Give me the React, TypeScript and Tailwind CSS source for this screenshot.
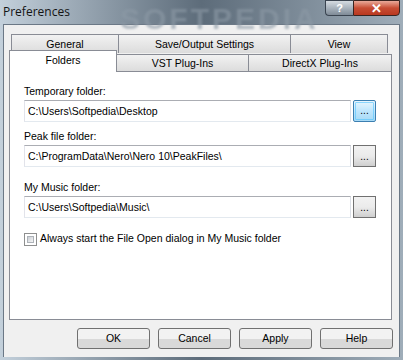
import React from "react";

const font = { fontFamily: '"Liberation Sans", Arial, sans-serif' };

function FolderField({ label, value, active, cls }: { label: string; value: string; active?: boolean; cls?: string }) {
  return (
    <div className={`flex flex-col ${cls ?? ""}`}>
      <div className="h-[14px] leading-[14px] mb-[2px]">{label}</div>
      <div className="flex items-center gap-[2px]">
        <div className="w-[327px] h-[22px] border border-[#abadb3] border-l-[#e2e3ea] border-r-[#dbdfe6] border-b-[#e3e9ef] bg-white pl-[3px] flex items-center leading-none">
          {value}
        </div>
        {active ? (
          <div className="w-[23px] h-[22px] rounded-[2px] border border-[#3c7fb1] bg-gradient-to-b from-[#eaf6fd] via-[#bee6fd] to-[#a7d9f5] flex items-center justify-center">
            <div className="w-[19px] h-[18px] rounded-[1px] border border-[#50c3ff]/60 flex items-end justify-center pb-[3px] text-[10px] leading-none">...</div>
          </div>
        ) : (
          <div className="w-[23px] h-[22px] border border-[#707070] bg-gradient-to-b from-[#f2f2f2] via-[#ebebeb] to-[#cfcfcf] flex items-end justify-center pb-[4px] text-[10px] leading-none">
            ...
          </div>
        )}
      </div>
    </div>
  );
}

function DlgButton({ children }: { children: React.ReactNode }) {
  return (
    <div className="w-[73px] h-[21px] rounded-[3px] border border-[#707070] bg-gradient-to-b from-[#f2f2f2] from-50% to-[#d9d9d9] to-50% flex items-center justify-center">
      {children}
    </div>
  );
}

function Tab({ w, children, cls }: { w: string; children: React.ReactNode; cls?: string }) {
  return (
    <div
      className={`${w} ${cls ?? ""} border border-[#898c95] border-b-0 bg-gradient-to-b from-[#f2f2f2] to-[#dcdcdc] flex items-start justify-center pt-[2px] leading-[14px]`}
    >
      {children}
    </div>
  );
}

export default function App() {
  return (
    <div
      className="w-[403px] h-[360px] overflow-hidden relative bg-gradient-to-r from-[#c3d0db] via-[#5d6c7a] to-[#9fadb9] text-[10.5px] text-black flex flex-col"
      style={font}
    >
      {/* Title bar */}
      <div className="h-[24px] flex items-start justify-between relative">
        <div className="absolute left-[120px] top-[-4px] text-[30px] font-bold tracking-[3px] text-[#8d9aa6] opacity-60 blur-[1px] select-none">
          SOFTPEDIA
        </div>
        <div
          className="relative pl-[3px] pt-[3px] text-[12px] text-[#141414]"
          style={{ fontFamily: '"Open Sans", "Liberation Sans", sans-serif' }}
        >
          Preferences
        </div>
        <div className="relative flex mr-[3px]">
          <div className="w-[28px] h-[16px] border border-[#3a4450] border-r-0 rounded-bl-[4px] bg-gradient-to-b from-[#d5dbe1] via-[#a9b3bd] to-[#7f8b97] flex items-center justify-center text-white font-bold text-[11px] leading-none">
            ?
          </div>
          <div className="w-[47px] h-[16px] border border-[#3a2420] rounded-br-[4px] bg-gradient-to-b from-[#e9a99a] via-[#c74d34] to-[#b9381f] flex items-center justify-center text-white font-bold text-[13px] leading-none">
            ✕
          </div>
        </div>
      </div>

      {/* Client area */}
      <div className="mx-[3px] h-[333px] bg-[#f0f0f0] border border-[#6b7886] border-b-0 flex flex-col">
        <div className="pl-[5px] pr-[7px] pt-[9px]">
          {/* Tab rows */}
          <div className="flex pl-[2px] h-[19px]">
            <Tab w="w-[108px]">General</Tab>
            <Tab w="w-[173px]" cls="-ml-[1px]">Save/Output Settings</Tab>
            <Tab w="w-[98px]" cls="-ml-[1px]">View</Tab>
          </div>
          <div className="flex items-end h-[21px] -mt-[3px] relative z-10">
            <div className="w-[108px] h-[22px] border border-[#898c95] border-b-0 bg-white flex items-start justify-center pt-[2px] leading-[14px] -mb-[1px]">
              Folders
            </div>
            <Tab w="w-[133px]" cls="h-[17px] -ml-[1px] !pt-[1px]">VST Plug-Ins</Tab>
            <Tab w="w-[144px]" cls="h-[17px] -ml-[1px] !pt-[1px]">DirectX Plug-Ins</Tab>
          </div>

          {/* Tab page */}
          <div className="h-[249px] border border-[#898c95] bg-white pl-[14px] pt-[12px] flex flex-col">
            <FolderField label="Temporary folder:" value="C:\Users\Softpedia\Desktop" active />
            <FolderField label="Peak file folder:" value="C:\ProgramData\Nero\Nero 10\PeakFiles\" cls="mt-[7px]" />
            <FolderField label="My Music folder:" value="C:\Users\Softpedia\Music\" cls="mt-[13px]" />
            <div className="flex items-center gap-[3px] mt-[14px] h-[14px]">
              <div className="w-[13px] h-[13px] border border-[#8e8f8f] bg-white p-[2px]">
                <div className="w-full h-full bg-gradient-to-br from-[#cbcfd5] to-[#f6f6f6] border border-[#aeb3b9]" />
              </div>
              <span>Always start the File Open dialog in My Music folder</span>
            </div>
          </div>
        </div>

        {/* Dialog buttons */}
        <div className="flex justify-end gap-[8px] pr-[6px] pt-[8px]">
          <DlgButton>OK</DlgButton>
          <DlgButton>Cancel</DlgButton>
          <DlgButton>Apply</DlgButton>
          <DlgButton>Help</DlgButton>
        </div>
      </div>
    </div>
  );
}
